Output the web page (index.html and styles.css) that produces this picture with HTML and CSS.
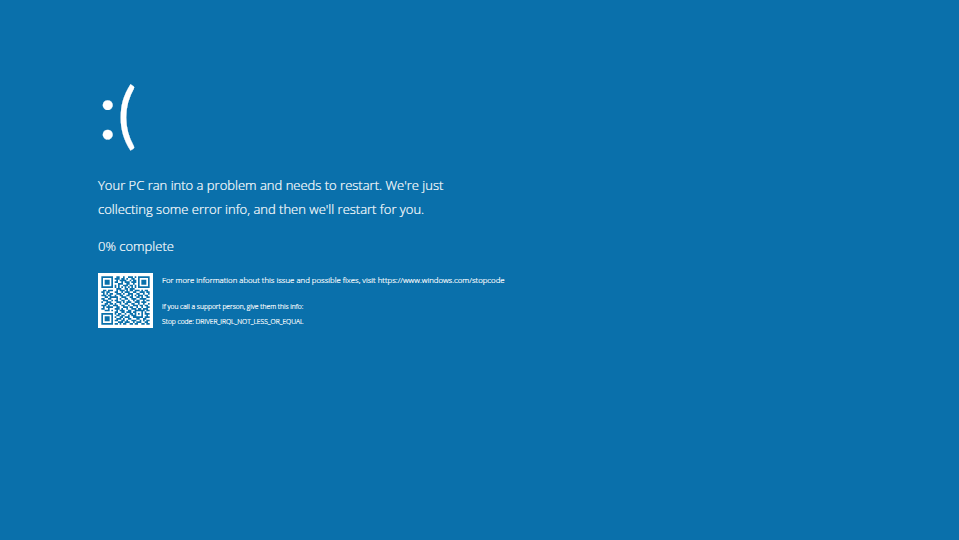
FILE: index.html
```html
<!DOCTYPE html>
<html lang="en">
<head>
  <meta charset="UTF-8" />
  <title>Your PC ran into a problem</title>
  <link rel="stylesheet" href="styles.css">
</head>
<body>

  <div class="screen">
    <div class="face">:<span class="mouth">(</span></div>
    <p class="message">Your PC ran into a problem and needs to restart. We're just<br>collecting some error info, and then we'll restart for you.</p>
    <p class="progress">0% complete</p>

    <div class="details">
      <svg class="qr" viewBox="-2 -2 33 33" aria-hidden="true">
        <rect x="-2" y="-2" width="33" height="33" fill="#fff"/>
        <path fill="none" stroke="#0a70ab" stroke-width="1" d="
          M0 .5h7M9 .5h2M13 .5h1M16 .5h3M20 .5h1M22 .5h7
          M0 1.5h1M6 1.5h1M8 1.5h3M12 1.5h2M15 1.5h1M18 1.5h2M22 1.5h1M28 1.5h1
          M0 2.5h1M2 2.5h3M6 2.5h1M9 2.5h1M11 2.5h4M17 2.5h1M19 2.5h2M22 2.5h1M24 2.5h3M28 2.5h1
          M0 3.5h1M2 3.5h3M6 3.5h1M8 3.5h2M12 3.5h1M14 3.5h3M18 3.5h3M22 3.5h1M24 3.5h3M28 3.5h1
          M0 4.5h1M2 4.5h3M6 4.5h1M10 4.5h3M15 4.5h2M19 4.5h1M22 4.5h1M24 4.5h3M28 4.5h1
          M0 5.5h1M6 5.5h1M8 5.5h1M10 5.5h1M13 5.5h3M17 5.5h2M20 5.5h1M22 5.5h1M28 5.5h1
          M0 6.5h7M8 6.5h1M10 6.5h1M12 6.5h1M14 6.5h1M16 6.5h1M18 6.5h1M20 6.5h1M22 6.5h7
          M9 7.5h3M14 7.5h2M17 7.5h3
          M1 8.5h2M4 8.5h3M9 8.5h1M11 8.5h3M15 8.5h1M17 8.5h2M20 8.5h3M24 8.5h1M26 8.5h2
          M0 9.5h2M3 9.5h2M8 9.5h2M12 9.5h1M14 9.5h3M19 9.5h2M23 9.5h3M27 9.5h2
          M1 10.5h1M3 10.5h1M5 10.5h2M9 10.5h3M13 10.5h1M16 10.5h3M21 10.5h2M25 10.5h1M28 10.5h1
          M0 11.5h3M4 11.5h2M8 11.5h1M11 11.5h2M15 11.5h2M18 11.5h1M20 11.5h1M22 11.5h3M26 11.5h2
          M2 12.5h2M5 12.5h2M7 12.5h3M12 12.5h3M17 12.5h2M21 12.5h2M24 12.5h1M27 12.5h2
          M0 13.5h2M4 13.5h2M9 13.5h1M11 13.5h1M14 13.5h2M18 13.5h3M23 13.5h4
          M1 14.5h3M6 14.5h1M8 14.5h2M12 14.5h2M16 14.5h1M19 14.5h1M21 14.5h2M25 14.5h1M27 14.5h2
          M0 15.5h1M3 15.5h3M9 15.5h3M13 15.5h1M15 15.5h3M20 15.5h3M24 15.5h3
          M2 16.5h2M5 16.5h2M8 16.5h1M11 16.5h1M14 16.5h2M18 16.5h2M22 16.5h1M25 16.5h1M28 16.5h1
          M0 17.5h3M4 17.5h1M7 17.5h3M12 17.5h2M16 17.5h1M19 17.5h3M23 17.5h2M26 17.5h2
          M1 18.5h1M3 18.5h3M6 18.5h1M9 18.5h2M13 18.5h3M17 18.5h2M21 18.5h1M24 18.5h1M27 18.5h2
          M0 19.5h2M4 19.5h1M8 19.5h3M12 19.5h1M15 19.5h1M18 19.5h3M22 19.5h2M25 19.5h3
          M2 20.5h3M6 20.5h1M9 20.5h1M11 20.5h3M16 20.5h2M20 20.5h6M27 20.5h2
          M8 21.5h2M12 21.5h2M15 21.5h3M19 21.5h2M24 21.5h1M26 21.5h1
          M0 22.5h7M8 22.5h1M10 22.5h2M14 22.5h1M17 22.5h2M20 22.5h1M22 22.5h1M24 22.5h1M26 22.5h3
          M0 23.5h1M6 23.5h1M9 23.5h2M12 23.5h2M16 23.5h1M18 23.5h3M24 23.5h1M27 23.5h1
          M0 24.5h1M2 24.5h3M6 24.5h1M8 24.5h1M11 24.5h2M14 24.5h3M19 24.5h1M20 24.5h5M26 24.5h3
          M0 25.5h1M2 25.5h3M6 25.5h1M9 25.5h3M13 25.5h1M16 25.5h2M21 25.5h2M25 25.5h2
          M0 26.5h1M2 26.5h3M6 26.5h1M8 26.5h2M12 26.5h2M15 26.5h1M18 26.5h3M23 26.5h1M25 26.5h1M27 26.5h2
          M0 27.5h1M6 27.5h1M10 27.5h3M14 27.5h3M19 27.5h1M21 27.5h3M26 27.5h2
          M0 28.5h7M8 28.5h2M11 28.5h1M13 28.5h2M17 28.5h2M20 28.5h2M24 28.5h2M27 28.5h2
        "/>
      </svg>
      <div class="info">
        <p class="info-link">For more information about this issue and possible fixes, visit https://www.windows.com/stopcode</p>
        <p class="info-small">If you call a support person, give them this info:</p>
        <p class="info-small">Stop code: DRIVER_IRQL_NOT_LESS_OR_EQUAL</p>
      </div>
    </div>
  </div>

</body>
</html>
```

FILE: styles.css
```css
* { box-sizing: border-box; margin: 0; padding: 0; }

body {
  font-family: 'Open Sans', 'Noto Sans', sans-serif;
  font-weight: 300;
  background-color: #0a70ab;
  color: #fff;
  height: 100vh;
  overflow: hidden;
  -webkit-text-stroke: 0.2px #fff;
}

.screen {
  padding: 62px 0 0 98px;
}

.face {
  font-family: 'Lato', sans-serif;
  font-size: 78px;
  font-weight: 400;
  line-height: 94px;
  margin-bottom: 18px;
}

.mouth {
  font-size: 71px;
  line-height: 1;
  vertical-align: -1px;
}

.message {
  font-size: 13px;
  line-height: 23.5px;
  white-space: nowrap;
}

.progress {
  font-size: 13px;
  line-height: 24px;
  margin-top: 13px;
}

.details {
  display: flex;
  gap: 9px;
  margin-top: 15px;
}

.qr {
  width: 55px;
  height: 55px;
  display: block;
}

.info {
  padding-top: 1px;
}

.info-link {
  font-size: 7.8px;
  line-height: 12px;
  white-space: nowrap;
  margin-bottom: 16px;
}

.info-small {
  font-size: 6.7px;
  line-height: 9px;
  margin-bottom: 6px;
  white-space: nowrap;
}
```
